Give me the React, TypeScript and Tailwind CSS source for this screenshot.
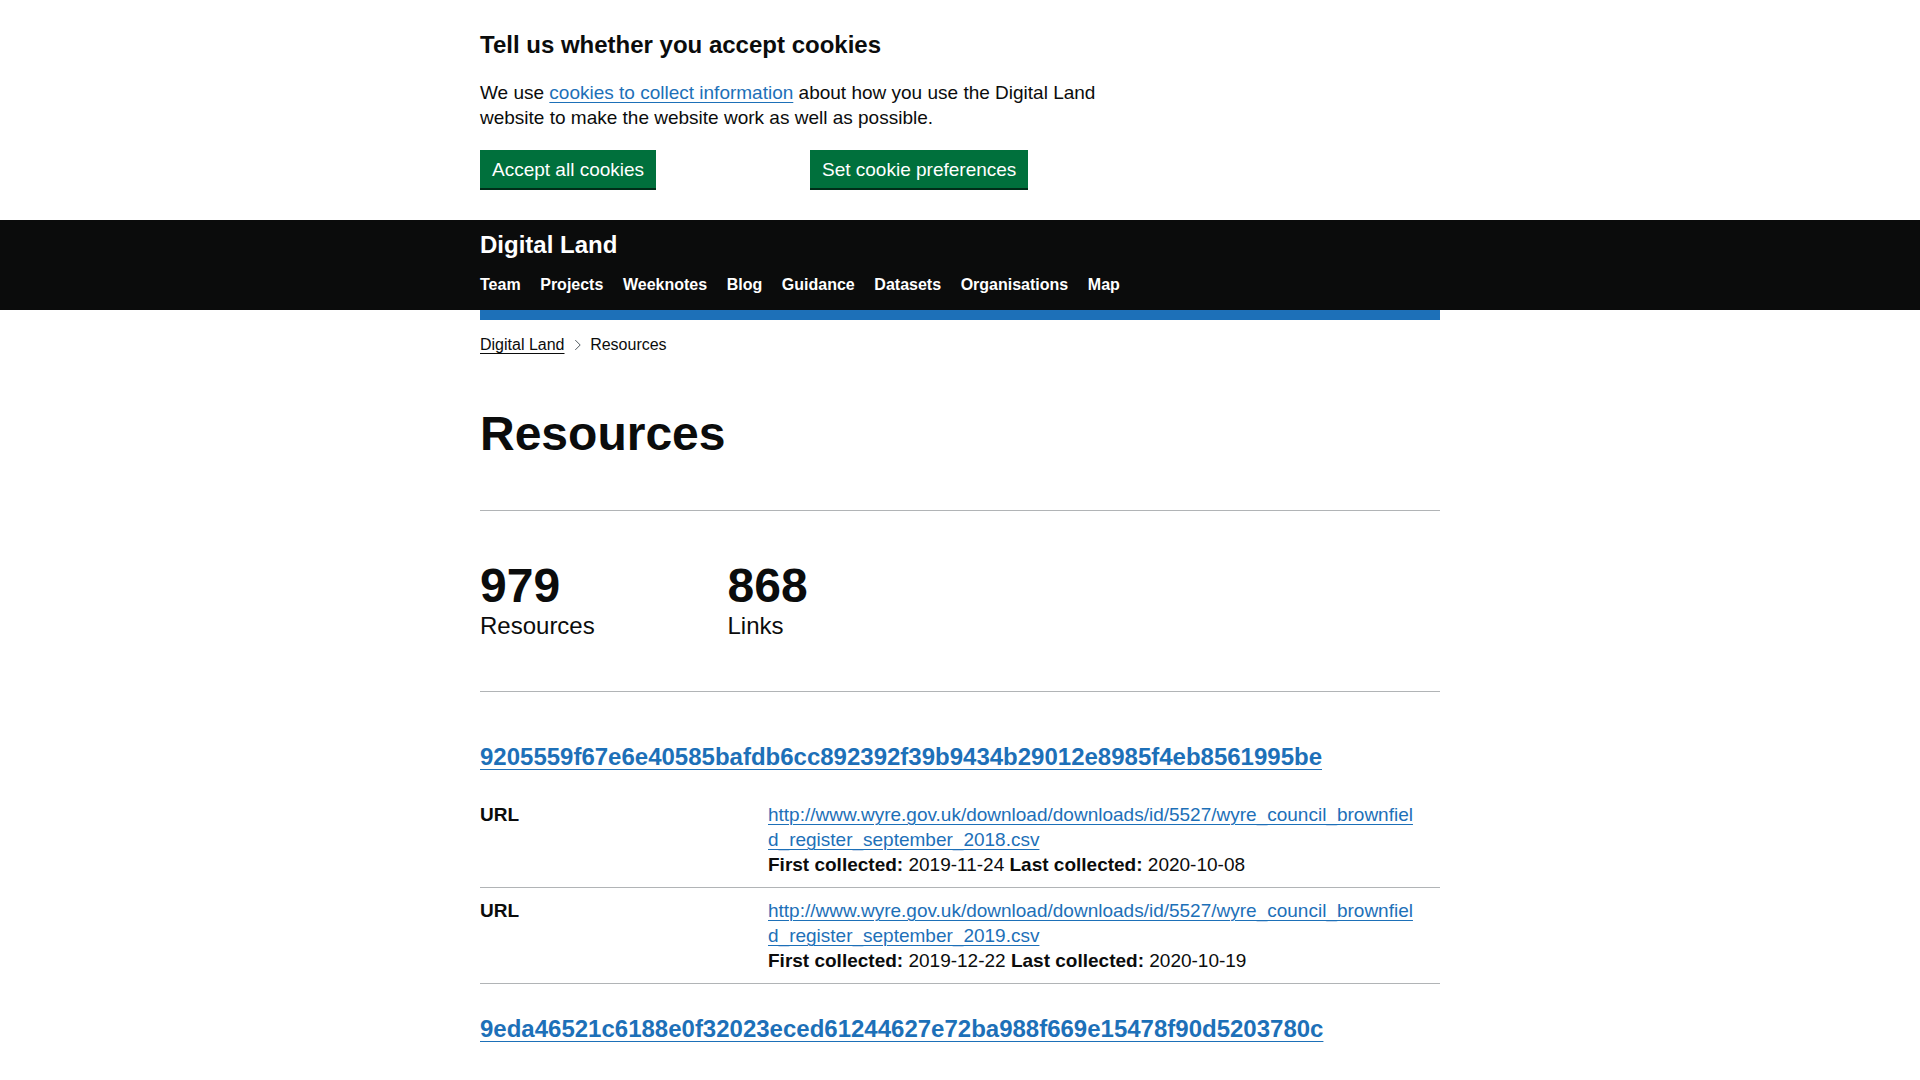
import React from "react";

const linkCls =
  "text-[#1d70b8] underline decoration-1 underline-offset-[0.1578em]";

function Chevron() {
  return (
    <svg
      width="16"
      height="20"
      viewBox="0 0 16 20"
      className="block shrink-0 overflow-visible"
      aria-hidden="true"
    >
      <path d="M0.3 5.1 L5.2 10 L0.3 14.9" fill="none" stroke="#505a5f" strokeWidth="1" />
    </svg>
  );
}

type Row = { url: string; first: string; last: string };

function SummaryRow({ row }: { row: Row }) {
  return (
    <div className="flex border-b border-[#b1b4b6]">
      <div className="w-[288px] shrink-0 pr-[20px] pt-[10px] pb-[10px] text-[19px] leading-[25px] font-bold">
        URL
      </div>
      <div className="w-[672px] pr-[20px] pt-[10px] pb-[10px] text-[19px] leading-[25px]">
        <a href="#" className={linkCls + " break-all"}>
          {row.url}
        </a>
        <div>
          <span className="font-bold">First collected:</span> {row.first}{" "}
          <span className="font-bold">Last collected:</span> {row.last}
        </div>
      </div>
    </div>
  );
}

export default function App() {
  const rows: Row[] = [
    {
      url: "http://www.wyre.gov.uk/download/downloads/id/5527/wyre_council_brownfield_register_september_2018.csv",
      first: "2019-11-24",
      last: "2020-10-08",
    },
    {
      url: "http://www.wyre.gov.uk/download/downloads/id/5527/wyre_council_brownfield_register_september_2019.csv",
      first: "2019-12-22",
      last: "2020-10-19",
    },
  ];
  const nav = ["Team", "Projects", "Weeknotes", "Blog", "Guidance", "Datasets", "Organisations", "Map"];

  return (
    <div className="min-h-screen bg-white text-[#0b0c0c] font-['Liberation_Sans',Arial,sans-serif]">
      {/* Cookie banner */}
      <div className="w-[960px] mx-auto pt-[30px]">
        <h2 className="text-[24px] leading-[30px] font-bold mb-[20px]">
          Tell us whether you accept cookies
        </h2>
        <p className="w-[630px] text-[19px] leading-[25px] mb-[20px]">
          We use{" "}
          <a href="#" className={linkCls}>
            cookies to collect information
          </a>{" "}
          about how you use the Digital Land website to make the website work as well as possible.
        </p>
        <div className="flex pb-[32px]">
          <div className="w-[330px] shrink-0">
            <button className="bg-[#00703c] text-white text-[19px] leading-[19px] pt-[8px] pb-[7px] px-[10px] border-2 border-transparent shadow-[0_2px_0_#002d18]">
              Accept all cookies
            </button>
          </div>
          <div>
            <button className="bg-[#00703c] text-white text-[19px] leading-[19px] pt-[8px] pb-[7px] px-[10px] border-2 border-transparent shadow-[0_2px_0_#002d18]">
              Set cookie preferences
            </button>
          </div>
        </div>
      </div>

      {/* Header */}
      <header className="bg-[#0b0c0c]">
        <div className="w-[960px] mx-auto pt-[10px] pb-[13px]">
          <div className="text-white text-[24px] leading-[30px] font-bold">Digital Land</div>
          <nav className="mt-[12px] flex gap-[19.6px] text-white text-[16px] leading-[25px] font-bold">
            {nav.map((n) => (
              <a key={n} href="#" className="text-white">
                {n}
              </a>
            ))}
          </nav>
        </div>
      </header>

      <div className="w-[960px] mx-auto">
        <div className="h-[10px] bg-[#1d70b8]" />

        {/* Breadcrumbs */}
        <div className="mt-[15px] flex items-center text-[16px] leading-[20px]">
          <a href="#" className="text-[#0b0c0c] underline decoration-1 underline-offset-[0.1578em]">
            Digital Land
          </a>
          <span className="ml-[10px] w-[15.655px] shrink-0">
            <Chevron />
          </span>
          <span>Resources</span>
        </div>

        <h1 className="mt-[54px] mb-[51px] text-[48px] leading-[50px] font-bold">Resources</h1>

        <hr className="border-0 border-t border-[#b1b4b6]" />

        <div className="flex pt-[50px] pb-[50px]">
          <div className="w-[247.5px] shrink-0">
            <div className="text-[48px] leading-[50px] font-bold">979</div>
            <div className="text-[24px] leading-[30px]">Resources</div>
          </div>
          <div>
            <div className="text-[48px] leading-[50px] font-bold">868</div>
            <div className="text-[24px] leading-[30px]">Links</div>
          </div>
        </div>

        <hr className="border-0 border-t border-[#b1b4b6]" />

        <h2 className="mt-[50px] mb-[20px] text-[24px] leading-[30px] font-bold">
          <a href="#" className={linkCls}>
            9205559f67e6e40585bafdb6cc892392f39b9434b29012e8985f4eb8561995be
          </a>
        </h2>

        <div className="mb-[30px]">
          {rows.map((r) => (
            <SummaryRow key={r.url} row={r} />
          ))}
        </div>

        <h2 className="mb-[20px] text-[24px] leading-[30px] font-bold">
          <a href="#" className={linkCls}>
            9eda46521c6188e0f32023eced61244627e72ba988f669e15478f90d5203780c
          </a>
        </h2>
      </div>
    </div>
  );
}
